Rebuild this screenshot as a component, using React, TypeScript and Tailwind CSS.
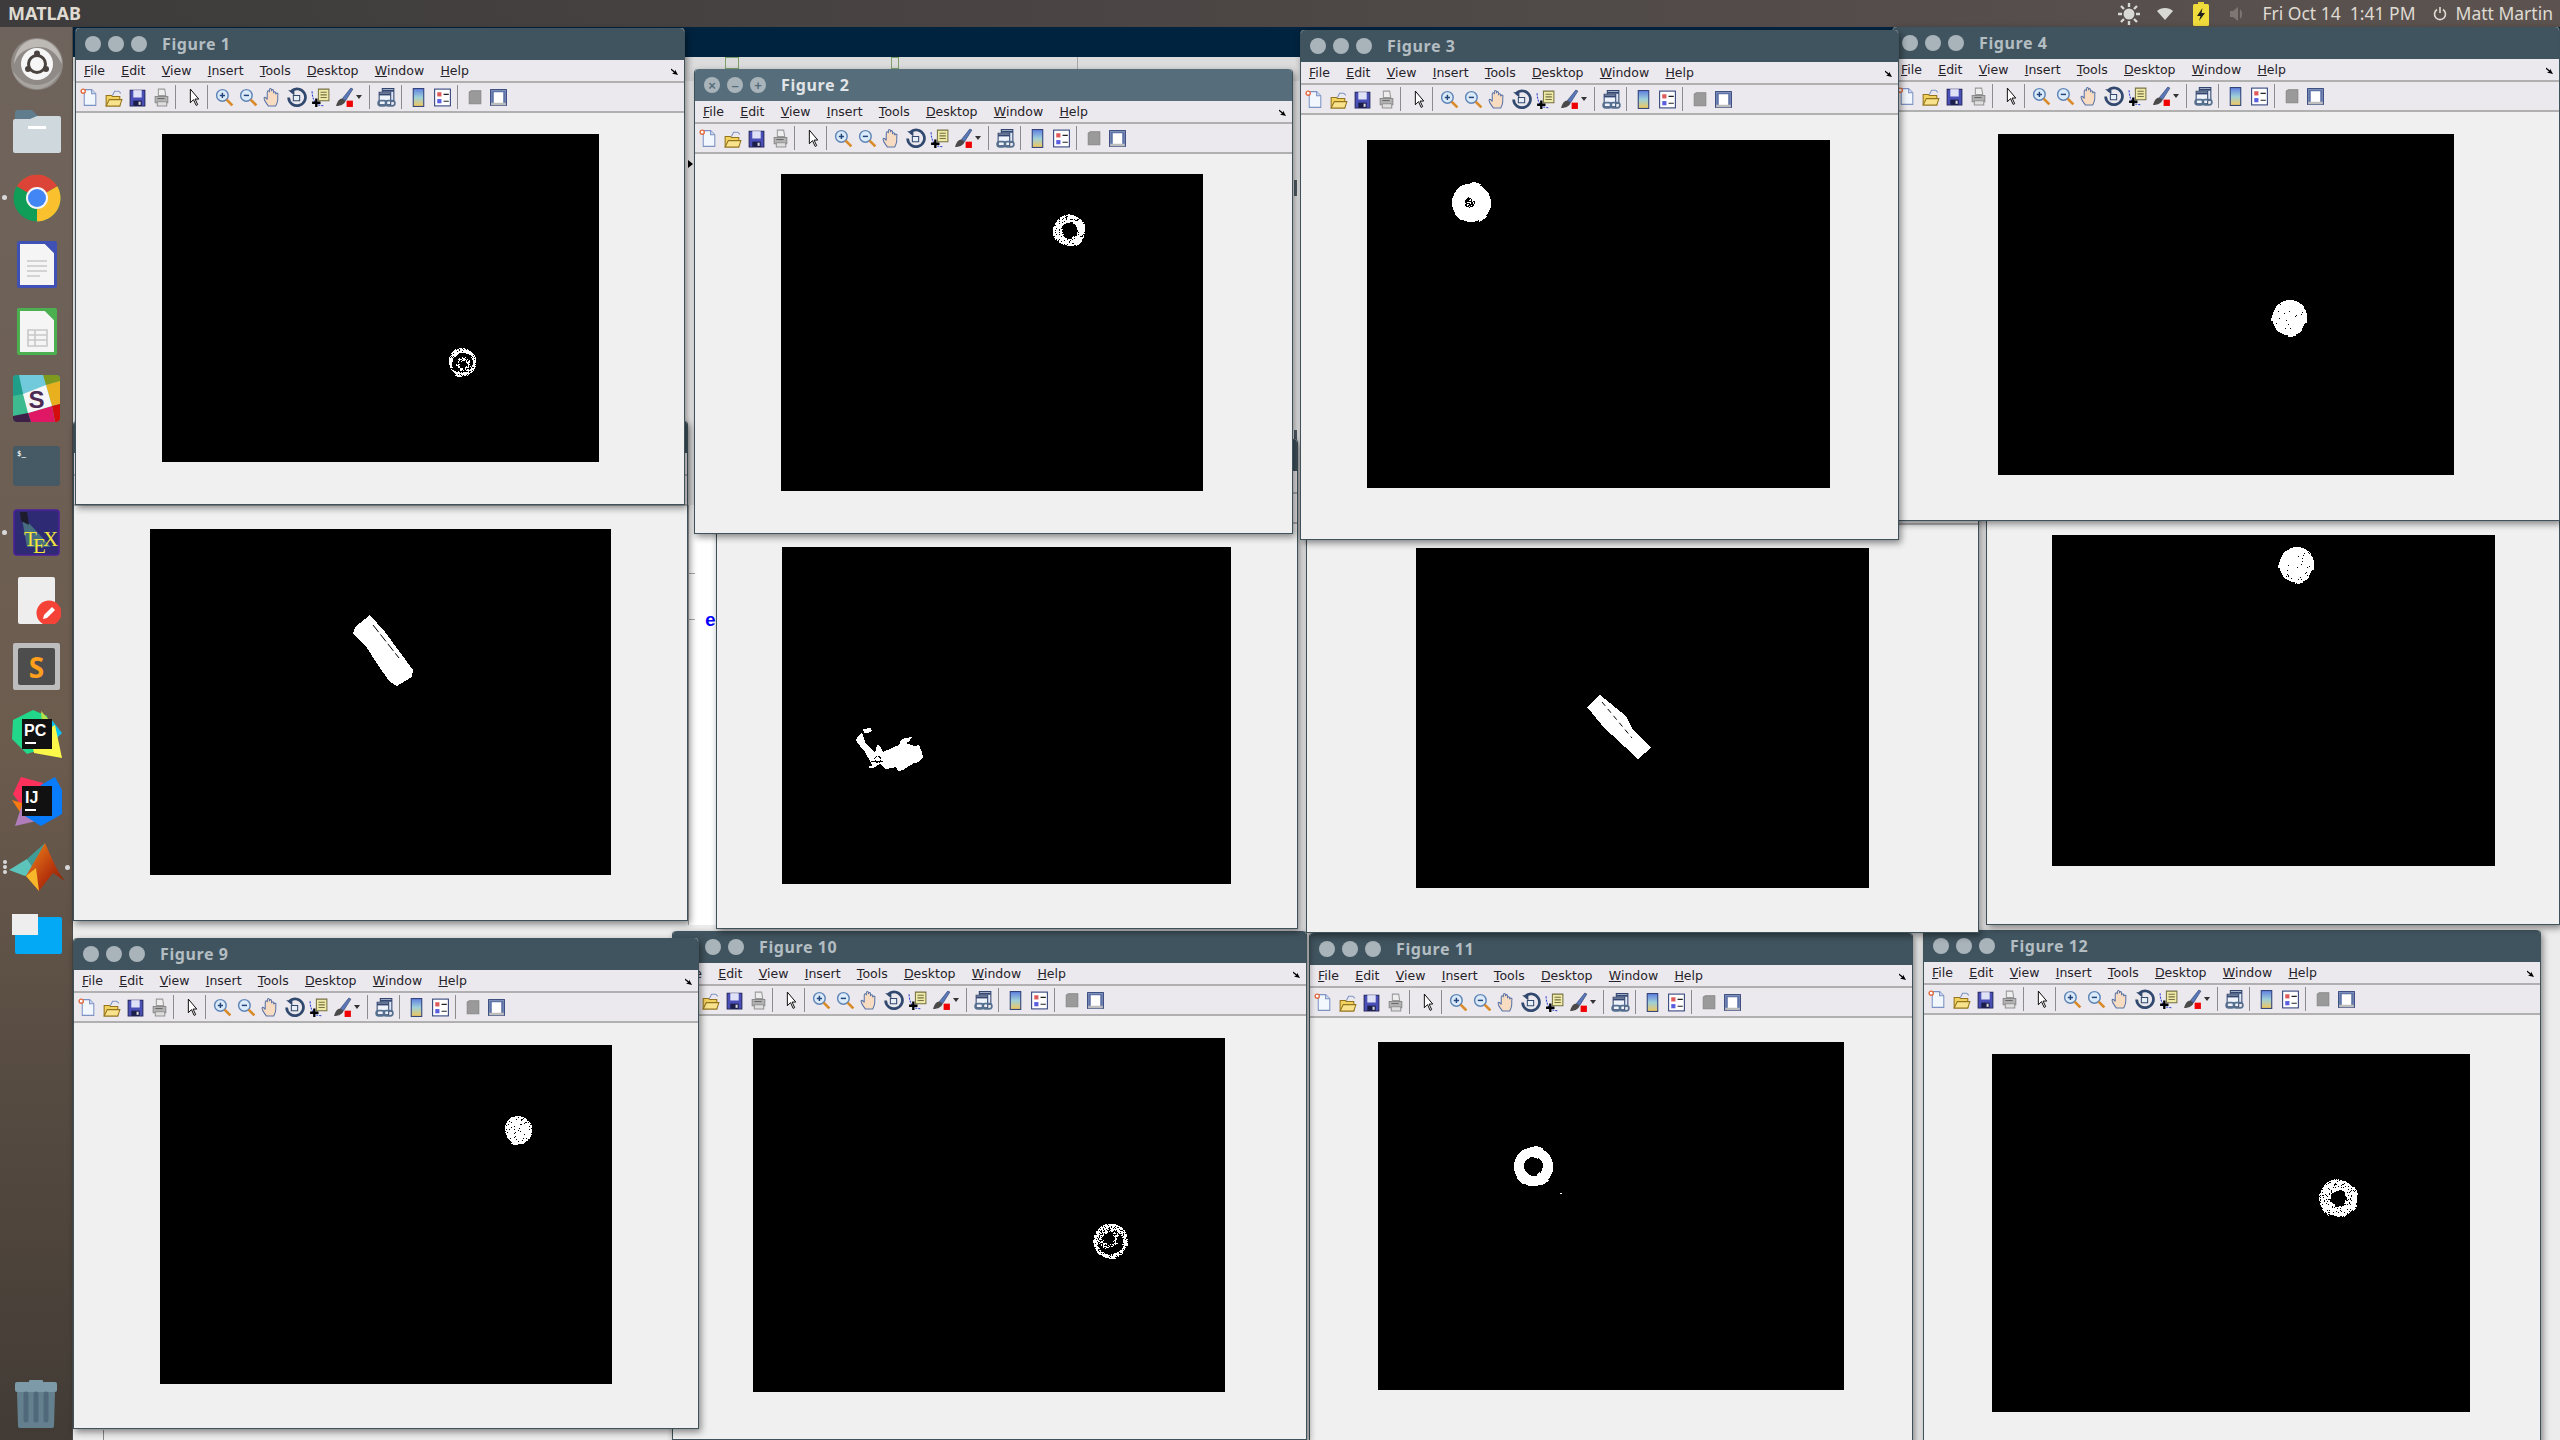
import type { ReactNode } from "react";

const noise = (x: number, y: number) => {
  const s = Math.sin(x * 12.9898 + y * 78.233) * 43758.5453;
  return s - Math.floor(s);
};

// binary blob, drawn pixel by pixel so it has the thresholded look of the plots
const Blob = ({ cx, cy, r, hole = 0, density = 1, jitter = 2, fill = "#fff" }: { cx: number; cy: number; r: number; hole?: number; density?: number; jitter?: number; fill?: string }) => {
  let d = "";
  const R = Math.ceil(r + jitter + 1);
  for (let y = -R; y <= R; y++) {
    for (let x = -R; x <= R; x++) {
      const dist = Math.hypot(x, y);
      const sector = Math.round((Math.atan2(y, x) + Math.PI) * 2.2);
      const j = (noise(sector, r) - 0.5) * jitter;
      if (dist < r + j && dist > hole - j && noise(x + cx, y + cy) < density) d += `M${cx + x} ${cy + y}h1v1h-1z`;
    }
  }
  return <path d={d} fill={fill} shapeRendering="crispEdges" />;
};

const Shape = ({ points }: { points: string }) => <polygon points={points} fill="#fff" shapeRendering="crispEdges" />;

const ToolIcon = ({ children }: { children: ReactNode }) => (
  <span className="flex w-[24px] h-[24px] items-center justify-center">
    <svg width="21" height="21" viewBox="0 0 20 20">{children}</svg>
  </span>
);

const Sep = ({ className }: { className: string }) => <span className={`w-px h-[24px] bg-[#8c8c8c] ${className}`} />;

const Toolbar = () => (
  <div className="flex h-[30px] items-center pl-[1px] bg-[#ebe9ed] border-b-2 border-[#b0b0b0]">
    <ToolIcon>
      <path d="M5 2.5h7l4 4v11H5z" fill="#f2f6fd" stroke="#7d93c4" />
      <path d="M12 2.5v4h4" fill="#cfdcf2" stroke="#7d93c4" />
      <circle cx="4" cy="4" r="2" fill="#fff" stroke="#e2673c" strokeWidth="1.3" />
    </ToolIcon>
    <ToolIcon>
      <path d="M3 8h5l1 1h7v9H3z" fill="#f2d25e" stroke="#94741d" />
      <path d="M9 8l2-4 4 0 2 2" fill="none" stroke="#7d93c4" />
      <path d="M3 18l3-6h12l-2 6z" fill="#f8e38c" stroke="#94741d" />
    </ToolIcon>
    <ToolIcon>
      <path d="M3 3h14v15H3z" fill="#4a4fb8" stroke="#23265f" />
      <path d="M6 3h8v7H6z" fill="#dfe1f6" />
      <path d="M6 13h8v5H6z" fill="#1c1e4a" />
      <path d="M11 14h2v3h-2z" fill="#d8d8d8" />
    </ToolIcon>
    <ToolIcon>
      <path d="M7 2h6l1 6H7z" fill="#eeeeee" stroke="#9a9a9a" />
      <path d="M4 9h12v6H4z" fill="#b2b2b2" stroke="#8a8a8a" />
      <path d="M6 14h9v4H6z" fill="#dedede" stroke="#929292" />
      <path d="M6 11h7" stroke="#6a6a6a" />
    </ToolIcon>
    <Sep className="ml-[2px]" />
    <span className="ml-[5px]">
      <ToolIcon>
        <path d="M7 2v13l3-3 2.5 5.5 1.5-.7L11.5 11.5H15z" fill="#fff" stroke="#000" strokeWidth="0.9" />
      </ToolIcon>
    </span>
    <Sep className="ml-[2px]" />
    <span className="ml-[4px]" />
    <ToolIcon>
      <circle cx="8" cy="8" r="5.5" fill="#dcebfa" stroke="#5f86b8" strokeWidth="1.4" />
      <path d="M5.5 8h5M8 5.5v5" stroke="#23467c" strokeWidth="1.4" />
      <path d="M12 12l5.5 5.5" stroke="#d98a2b" strokeWidth="2.6" />
    </ToolIcon>
    <ToolIcon>
      <circle cx="8" cy="8" r="5.5" fill="#dcebfa" stroke="#5f86b8" strokeWidth="1.4" />
      <path d="M5.5 8h5" stroke="#23467c" strokeWidth="1.4" />
      <path d="M12 12l5.5 5.5" stroke="#d98a2b" strokeWidth="2.6" />
    </ToolIcon>
    <ToolIcon>
      <path d="M6 18c-2-3-4-5-4-7s2-1 3 1V5c0-2 2-2 2 0V3c0-2 2-2 2 0v1c0-2 2-2 2 0v2c0-2 2-2 2 0v1c1-2 3-1 2 1v4c0 3-1 4-2 6z" fill="#f8dcc2" stroke="#5b74a8" />
    </ToolIcon>
    <ToolIcon>
      <path d="M5 4a8 8 0 1 1-2.5 6" fill="none" stroke="#31486f" strokeWidth="2.6" />
      <path d="M2 3h6v5z" fill="#31486f" />
      <path d="M7 8h6v5H7z" fill="#e8eef6" stroke="#31486f" />
    </ToolIcon>
    <ToolIcon>
      <path d="M8 2h10v11H8z" fill="#efe9a6" stroke="#767245" />
      <path d="M10 5h6M10 7.5h6M10 10h6" stroke="#767245" />
      <path d="M2 4c0 6 2 10 5 13l6 1" fill="none" stroke="#2a3fd0" strokeDasharray="2 1" />
      <path d="M6 11v8M2 15h8" stroke="#000" strokeWidth="2.2" />
    </ToolIcon>
    <ToolIcon>
      <path d="M8 11L16 1l2 1-7 11z" fill="#5a78b8" stroke="#2d3f70" strokeWidth="0.6" />
      <path d="M2 18c1-4 3-7 6-7l3 2c-1 3-4 5-9 5z" fill="#4a4a4a" />
      <path d="M12 13h6v6h-6z" fill="#f00000" />
    </ToolIcon>
    <span className="ml-[-1px] w-[8px] flex justify-center">
      <span className="border-x-[3px] border-t-[4px] border-x-transparent border-t-[#333]" />
    </span>
    <Sep className="ml-[6px]" />
    <span className="ml-[4px]" />
    <ToolIcon>
      <path d="M6 1.5h11v12H6z" fill="#dfe7f5" stroke="#33466f" />
      <path d="M6 3.5h11" stroke="#33466f" strokeWidth="2" />
      <path d="M3 5h11v12H3z" fill="#eef2fa" stroke="#33466f" />
      <path d="M3 7h11" stroke="#33466f" strokeWidth="2" />
      <rect x="2" y="13" width="8" height="5" rx="2.5" fill="none" stroke="#56708f" strokeWidth="1.6" />
      <rect x="9" y="13" width="9" height="5" rx="2.5" fill="none" stroke="#56708f" strokeWidth="1.6" />
    </ToolIcon>
    <Sep className="ml-[3px]" />
    <span className="ml-[4px]" />
    <ToolIcon>
      <defs>
        <linearGradient id="cbar" x1="0" y1="0" x2="0" y2="1">
          <stop offset="0" stopColor="#5f7fe0" />
          <stop offset="0.5" stopColor="#9fd0d8" />
          <stop offset="1" stopColor="#f2c85a" />
        </linearGradient>
      </defs>
      <rect x="5" y="1.5" width="10" height="17" fill="url(#cbar)" stroke="#2d3f78" />
    </ToolIcon>
    <ToolIcon>
      <rect x="2.5" y="2" width="15" height="16" fill="#fff" stroke="#2d3f78" />
      <path d="M5 5h4v4H5z" fill="#df5a5a" />
      <path d="M5 11.5h4v4H5z" fill="#5a5fdf" />
      <path d="M11 7h5M11 13.5h5" stroke="#222" />
    </ToolIcon>
    <Sep className="ml-[3px]" />
    <span className="ml-[4px]" />
    <ToolIcon>
      <path d="M5 5l2-1.5h9V16H5z" fill="#9a9a9a" stroke="#8a8a8a" />
    </ToolIcon>
    <ToolIcon>
      <rect x="2.5" y="2.5" width="15" height="15" fill="#fff" stroke="#2d3f78" />
      <path d="M3 3h14v2H3zM3 5h2.5v12H3zM14.5 5H17v12h-2.5z" fill="#5f74a8" />
      <path d="M3 15h14v2.5H3z" fill="#bdbdbd" />
    </ToolIcon>
  </div>
);

const menus = ["File", "Edit", "View", "Insert", "Tools", "Desktop", "Window", "Help"];

const Menu = () => (
  <div className="flex h-[23px] items-center gap-[16.3px] pl-[8px] pr-[5px] pt-[1px] bg-[#ebe9ed] border-b-2 border-[#b0b0b0] font-['DejaVu_Sans',sans-serif] text-[12.5px] text-[#26222a]">
    {menus.map((m) => (
      <span key={m}>
        <span className="underline">{m[0]}</span>
        {m.slice(1)}
      </span>
    ))}
    <svg className="ml-auto" width="9" height="9" viewBox="0 0 9 9">
      <path d="M1 1.5l4 3V2.5l3 5.5-6-1.5 2-1-3-2.5z" fill="#000" />
    </svg>
  </div>
);

const Light = ({ glyph }: { glyph?: string }) => (
  <span className="flex w-[16px] h-[16px] items-center justify-center rounded-full bg-[#a9b4ba]">
    {glyph && <span className="font-['Liberation_Sans',sans-serif] font-bold text-[13px] leading-none text-[#566e7b]">{glyph}</span>}
  </span>
);

type FigureProps = {
  n: number;
  pos: string;
  plot: string;
  box: string;
  active?: boolean;
  children: ReactNode;
};

const Figure = ({ n, pos, plot, box, active, children }: FigureProps) => (
  <div className={`absolute flex flex-col bg-[#f0f0f0] border-x border-b border-[#3f515a] rounded-t-[4px] shadow-[2px_3px_7px_rgba(0,0,0,0.45)] ${pos}`}>
    <div className={`flex h-[32px] shrink-0 items-center pl-[9px] gap-[7px] rounded-t-[4px] ${active ? "bg-[#566e7b]" : "bg-[#40545f]"}`}>
      <Light glyph={active ? "×" : undefined} />
      <Light glyph={active ? "–" : undefined} />
      <Light glyph={active ? "+" : undefined} />
      <span className={`ml-[8px] font-['Noto_Sans',sans-serif] font-bold text-[16px] tracking-[0.6px] ${active ? "text-[#e1e5e7]" : "text-[#b3bdc2]"}`}>Figure {n}</span>
    </div>
    <Menu />
    <Toolbar />
    <div className={`bg-black shrink-0 ${plot}`}>
      <svg className="block w-full h-full" viewBox={box}>{children}</svg>
    </div>
  </div>
);

const TopBar = () => (
  <div className="flex h-[27px] shrink-0 items-center pl-[8px] pr-[7px] bg-gradient-to-r from-[#3d3b3b] to-[#5c5350] text-[#dfdbd2] font-['Noto_Sans',sans-serif] text-[17.5px]">
    <span className="font-bold text-[18px]">MATLAB</span>
    <svg className="ml-auto" width="24" height="24" viewBox="0 0 24 24" fill="#d8d8d4" stroke="#d8d8d4">
      <circle cx="12" cy="12" r="5.5" stroke="none" />
      <path d="M12 1v4M12 19v4M1 12h4M19 12h4M4 4l3 3M17 17l3 3M20 4l-3 3M7 17l-3 3" strokeWidth="2.4" />
    </svg>
    <svg className="ml-[16px]" width="16" height="14" viewBox="0 0 16 14">
      <path d="M0 4c4-4 12-4 16 0l-8 9z" fill="#d8d8d4" />
    </svg>
    <svg className="ml-[20px]" width="16" height="24" viewBox="0 0 16 24">
      <rect x="5" y="0" width="6" height="3" fill="#e8d23a" />
      <rect x="0" y="2" width="16" height="22" rx="1.5" fill="#efdb3c" />
      <path d="M9.5 6L4 14h3.5L6 19l6-8H8.5z" fill="#1c1c1c" />
    </svg>
    <svg className="ml-[20px]" width="16" height="16" viewBox="0 0 16 16" fill="#7d7672">
      <path d="M1 5h3l5-4v14l-5-4H1z" />
      <path d="M11 3a7 7 0 0 1 0 10z" />
    </svg>
    <span className="ml-[17px] whitespace-pre">Fri Oct 14  1:41 PM</span>
    <svg className="ml-[17px]" width="14" height="15" viewBox="0 0 14 15" fill="none" stroke="#dfdbd2" strokeWidth="1.6">
      <path d="M7 1v6M4 3.5a5.5 5.5 0 1 0 6 0" />
    </svg>
    <span className="ml-[9px]">Matt Martin</span>
  </div>
);

const DockSlot = ({ dot, children }: { dot?: boolean; children: ReactNode }) => (
  <div className="relative flex h-[67px] w-[73px] shrink-0 items-center justify-center">
    {dot && <span className="absolute left-[2px] top-[31px] w-[5px] h-[5px] rounded-full bg-[#d8d8d8]" />}
    {children}
  </div>
);

const Dock = () => (
  <div className="flex flex-col w-[73px] shrink-0 pt-[3px] bg-gradient-to-b from-[#6f645d] via-[#6c5c4e] to-[#423b35] border-r border-[#4d4a48]">
    <DockSlot>
      <svg width="54" height="54" viewBox="0 0 54 54">
        <circle cx="27" cy="27" r="26" fill="#8f8a86" />
        <path d="M27 2c14 0 25 12 25 25-6-12-14-18-25-17C16 11 8 16 4 27 5 13 14 2 27 2z" fill="#bdbab6" />
        <path d="M27 52c-10 0-22-8-24-18 6 9 14 14 24 14 9 0 17-5 23-14-3 10-13 18-23 18z" fill="#a8a4a0" />
        <circle cx="27" cy="27" r="16" fill="#f6f6f6" />
        <circle cx="27" cy="27" r="8.5" fill="none" stroke="#4a4340" strokeWidth="3" />
        <circle cx="27" cy="16.5" r="3" fill="#4a4340" />
        <circle cx="18" cy="32" r="3" fill="#4a4340" />
        <circle cx="36" cy="32" r="3" fill="#4a4340" />
      </svg>
    </DockSlot>
    <DockSlot>
      <svg width="48" height="44" viewBox="0 0 48 44">
        <path d="M2 4q0-3 3-3h14l6 6h20q1 0 1 2v10H2z" fill="#5f7d8c" />
        <path d="M0 12q0-2 2-2h15l7-3 22 0q2 0 2 2v33q0 2-2 2H2q-2 0-2-2z" fill="#cfd8dc" />
        <rect x="15" y="17" width="18" height="3" fill="#fff" />
      </svg>
    </DockSlot>
    <DockSlot dot>
      <svg width="54" height="54" viewBox="0 0 54 54">
        <circle cx="27" cy="27" r="23.5" fill="#0f9d58" />
        <path d="M27 27L6.65 15.25A23.5 23.5 0 0 1 47.35 15.25Z" fill="#db4437" />
        <path d="M27 27L47.35 15.25A23.5 23.5 0 0 1 27 50.5Z" fill="#fbc02d" />
        <circle cx="27" cy="27" r="11" fill="#f5f5f5" />
        <circle cx="27" cy="27" r="9" fill="#4285f4" />
      </svg>
    </DockSlot>
    <DockSlot>
      <svg width="40" height="47" viewBox="0 0 40 47">
        <rect width="40" height="47" rx="2" fill="#3f51b5" />
        <path d="M3 3h25l9 9v32H3z" fill="#f5f5f5" />
        <path d="M28 3l9 9V3z" fill="#3f51b5" />
        <path d="M10 20h20M10 25h20M10 30h20M10 35h13" stroke="#c8c8c8" strokeWidth="1.6" />
      </svg>
    </DockSlot>
    <DockSlot>
      <svg width="40" height="47" viewBox="0 0 40 47">
        <rect width="40" height="47" rx="2" fill="#4caf50" />
        <path d="M3 3h25l9 9v32H3z" fill="#f5f5f5" />
        <path d="M28 3l9 9V3z" fill="#4caf50" />
        <path d="M11 22h19v16H11zM11 27h19M11 32h19M18 22v16" fill="none" stroke="#c8c8c8" strokeWidth="1.6" />
      </svg>
    </DockSlot>
    <DockSlot>
      <svg width="47" height="47" viewBox="0 0 47 47">
        <rect width="47" height="47" rx="4" fill="#3eba91" />
        <path d="M4 0h28l2 11-24 8z" fill="#70cadb" />
        <path d="M0 4q0-4 4-4h2l4 19L0 21z" fill="#1f9e8a" />
        <path d="M30 0h13q4 0 4 4v2L33 10z" fill="#7d9a1f" />
        <path d="M33 10l14-4v23l-8 2z" fill="#e8b01e" />
        <path d="M39 31l8-2v14q0 4-4 4h-1z" fill="#d40e0d" />
        <path d="M15 38l24-7 3 16H18z" fill="#e01765" />
        <path d="M0 41l15-3 3 9H4q-4 0-4-4z" fill="#3e1f47" />
        <path d="M10 19l23-9 6 21-24 7z" fill="#f6f6f6" />
        <text x="23.5" y="33" textAnchor="middle" fontFamily="'Liberation Sans',sans-serif" fontWeight="700" fontSize="24" fill="#4d2a54">S</text>
      </svg>
    </DockSlot>
    <DockSlot>
      <svg width="47" height="40" viewBox="0 0 47 40">
        <rect width="47" height="40" rx="3" fill="#455a64" />
        <text x="4" y="10" fontFamily="'DejaVu Sans Mono',monospace" fontWeight="700" fontSize="7.5" fill="#e8ecee">$_</text>
      </svg>
    </DockSlot>
    <DockSlot dot>
      <svg width="48" height="48" viewBox="0 0 48 48">
        <rect x="1" y="1" width="45" height="45" rx="3" fill="#2f2a74" stroke="#4b1f9c" strokeWidth="1.5" />
        <path d="M8 4l6 8 24 26H14z" fill="#5aa58a" opacity="0.55" />
        <path d="M7 3h7l2 13-8-4z" fill="#1c1c2c" />
        <text x="11" y="37" fontFamily="'Liberation Serif',serif" fontSize="21" fill="#f3e53a">T</text>
        <text x="20" y="44" fontFamily="'Liberation Serif',serif" fontSize="21" fill="#f3e53a">E</text>
        <text x="30" y="37" fontFamily="'Liberation Serif',serif" fontSize="21" fill="#f3e53a">X</text>
      </svg>
    </DockSlot>
    <DockSlot>
      <svg width="48" height="48" viewBox="0 0 48 48">
        <rect x="5" y="1" width="37" height="47" rx="2" fill="#eeeeee" />
        <circle cx="36" cy="37" r="12.5" fill="#f44336" />
        <path d="M30 43l1-4 8-8 3 3-8 8z" fill="#fff" />
      </svg>
    </DockSlot>
    <DockSlot>
      <svg width="47" height="47" viewBox="0 0 47 47">
        <rect width="47" height="47" rx="2" fill="#bdbdbd" />
        <rect x="5" y="5" width="37" height="37" rx="2" fill="#4d4d4d" />
        <text x="23.5" y="35" textAnchor="middle" fontFamily="'Noto Sans',sans-serif" fontWeight="700" fontSize="28" fill="#ff9f1c">S</text>
      </svg>
    </DockSlot>
    <DockSlot>
      <svg width="52" height="50" viewBox="0 0 52 50">
        <path d="M2 11l20-10 14 6 5 30-25 8L1 30z" fill="#21d789" />
        <path d="M30 2l12 13-10 10z" fill="#b7e04a" />
        <path d="M40 10l11 14-10 10z" fill="#07c3f2" />
        <path d="M20 30l24-14 7 33-28-5z" fill="#fcf84a" />
        <rect x="11" y="10" width="30" height="30" fill="#111" />
        <text x="13" y="27" fontFamily="'Liberation Sans',sans-serif" fontWeight="700" fontSize="16" fill="#fff">PC</text>
        <rect x="14" y="33" width="11" height="2" fill="#fff" />
      </svg>
    </DockSlot>
    <DockSlot>
      <svg width="52" height="50" viewBox="0 0 52 50">
        <path d="M2 18L10 1l22 6 3 24-18 8z" fill="#fe315d" />
        <path d="M1 24l10 3 2 15z" fill="#f97a12" />
        <path d="M14 20l16 24-26 6z" fill="#b07cb9" />
        <path d="M30 9l14-8 7 13v24l-21 12-16-10z" fill="#087cfa" />
        <rect x="11" y="10" width="30" height="30" fill="#111" />
        <text x="14" y="27" fontFamily="'Liberation Sans',sans-serif" fontWeight="700" fontSize="16" fill="#fff">IJ</text>
        <rect x="14" y="33" width="11" height="2" fill="#fff" />
      </svg>
    </DockSlot>
    <DockSlot>
      <span className="absolute left-[3px] top-[26px] flex flex-col gap-[1px]">
        <span className="w-[4px] h-[4px] rounded-full bg-[#d8d8d8]" />
        <span className="w-[4px] h-[4px] rounded-full bg-[#d8d8d8]" />
        <span className="w-[4px] h-[4px] rounded-full bg-[#d8d8d8]" />
      </span>
      <span className="absolute left-[65px] top-[31px] w-[5px] h-[5px] rounded-full bg-[#d8d8d8]" />
      <svg width="56" height="50" viewBox="0 0 56 50">
        <defs>
          <linearGradient id="membrane" x1="0" y1="0" x2="1" y2="1">
            <stop offset="0" stopColor="#f28b1c" />
            <stop offset="0.6" stopColor="#b8360c" />
            <stop offset="1" stopColor="#7a1a06" />
          </linearGradient>
        </defs>
        <path d="M0 27l18-11 8 11-10 6z" fill="#5cc4bb" />
        <path d="M18 16l18-16-10 27z" fill="#3f9c96" />
        <path d="M36 0c5 10 10 26 20 38L44 30 30 48 17 33z" fill="url(#membrane)" />
        <path d="M17 33l10-8 3 23z" fill="#f6b72a" />
      </svg>
    </DockSlot>
    <DockSlot>
      <span className="relative flex w-[50px] h-[40px]">
        <span className="absolute left-[3px] top-[2px] w-[47px] h-[37px] rounded-[2px] bg-[#03a9f4]" />
        <span className="absolute left-0 top-[-1px] w-[26px] h-[21px] bg-[#eeeeee]" />
      </span>
    </DockSlot>
    <div className="mt-auto flex justify-center pb-[12px]">
      <svg width="42" height="48" viewBox="0 0 42 48">
        <rect x="14" y="0" width="14" height="4" rx="1" fill="#7d9aa8" />
        <rect x="0" y="2" width="42" height="10" rx="2" fill="#7d9aa8" />
        <path d="M2 12h38l-1 34q0 2-2 2H5q-2 0-2-2z" fill="#64808e" />
        <path d="M11 14v26M21 14v26M31 14v26" stroke="#50697a" strokeWidth="5" strokeLinecap="round" />
      </svg>
    </div>
  </div>
);

export default function App() {
  return (
    <div className="relative flex flex-col w-[2560px] h-[1440px] overflow-hidden bg-[#efefef]">
      <TopBar />
      <div className="flex flex-1 min-h-0">
        <Dock />
        {/* the MATLAB desktop behind all the figures */}
        <div className="flex flex-col flex-1">
          <div className="h-[30px] bg-[#00233f]" />
          <div className="flex h-[24px] items-start gap-[152px] pl-[652px] bg-[#dcdcdc]">
            <span className="w-[14px] h-[12px] border border-[#7da06a]" />
            <span className="w-[8px] h-[12px] border border-[#7da06a]" />
            <span className="w-px h-[24px] bg-[#a8a8a8] ml-[26px]" />
          </div>
          <div className="flex-1 bg-[#ececec]" />
        </div>
      </div>

      <div className="absolute left-[688px] top-[505px] w-[30px] h-[420px] border-l border-[#a8a8a8] bg-white">
        <span className="absolute left-0 top-[68px] w-[6px] h-px bg-[#a8a8a8]" />
        <span className="absolute left-0 top-[114px] w-[6px] h-px bg-[#a8a8a8]" />
        <span className="absolute left-[16px] top-[106px] font-['Liberation_Mono',monospace] font-bold text-[18px] leading-[20px] text-[#0000ff]">e</span>
      </div>
      <span className="absolute left-[688px] top-[160px] border-y-[4px] border-l-[5px] border-y-transparent border-l-black z-10" />
      <span className="absolute left-[1294px] top-[180px] w-[3px] h-[16px] bg-[#55606a]" />
      <span className="absolute left-[1294px] top-[430px] w-[3px] h-[44px] bg-[#55606a]" />
      <span className="absolute left-[103px] top-[1430px] w-[1px] h-[10px] bg-[#888]" />

      <Figure n={12} pos="left-[1923px] top-[930px] w-[618px] h-[515px]" plot="ml-[68px] mt-[39px] w-[478px] h-[358px]" box="1992 1054 478 358">
        <Blob cx={2338} cy={1198} r={19} hole={8} density={0.88} />
        <Blob cx={2338} cy={1198} r={12} hole={10} density={0.25} jitter={0} />
      </Figure>
      <Figure n={11} pos="left-[1309px] top-[933px] w-[604px] h-[512px]" plot="ml-[68px] mt-[24px] w-[466px] h-[348px]" box="1378 1042 466 348">
        <Blob cx={1533} cy={1166} r={20} hole={9} jitter={1.5} />
        <rect x={1560} y={1193} width={2} height={1} fill="#fff" />
      </Figure>
      <Figure n={10} pos="left-[672px] top-[931px] w-[635px] h-[509px]" plot="ml-[80px] mt-[22px] w-[472px] h-[354px]" box="753 1038 472 354">
        <Blob cx={1110} cy={1241} r={17} hole={13} density={0.8} />
        <Blob cx={1108} cy={1238} r={10} hole={6} density={0.55} />
      </Figure>
      <Figure n={9} pos="left-[73px] top-[938px] w-[626px] h-[491px]" plot="ml-[86px] mt-[22px] w-[452px] h-[339px]" box="160 1045 452 339">
        <Blob cx={518} cy={1130} r={14} density={0.93} />
      </Figure>
      <Figure n={8} pos="left-[1986px] top-[430px] w-[574px] h-[495px]" plot="ml-[65px] mt-[20px] w-[443px] h-[331px]" box="2052 535 443 331">
        <Blob cx={2296} cy={565} r={17} density={0.98} jitter={3} />
      </Figure>
      <Figure n={7} pos="left-[1306px] top-[440px] w-[673px] h-[493px]" plot="ml-[109px] mt-[23px] w-[453px] h-[340px]" box="1416 548 453 340">
        <Shape points="1600,695 1587,707 1606,730 1612,735 1638,759 1651,748 1632,728 1626,716" />
        <path d="M1602 702l30 36" stroke="#000" strokeWidth="1" strokeDasharray="5 4" />
      </Figure>
      <Figure n={6} pos="left-[716px] top-[439px] w-[582px] h-[490px]" plot="ml-[65px] mt-[23px] w-[449px] h-[337px]" box="782 547 449 337">
        <Shape points="856,740 858,736 862,733 866,744 871,749 875,753 877,745 880,746 883,752 892,748 899,745 901,740 905,738 912,737 909,742 905,743 915,746 919,745 922,752 923,757 919,762 914,763 903,770 898,771 896,767 886,769 880,764 873,768 871,763 865,752 860,746 857,742" />
        <Shape points="863,729 871,728 872,731 868,733 864,733" />
        <Blob cx={877} cy={759} r={4} hole={2} density={0.35} jitter={0} fill="#000" />
        <rect x={871} y={761} width={12} height={1} fill="#000" />
        <rect x={869} y={766} width={4} height={2} fill="#fff" />
      </Figure>
      <Figure n={5} pos="left-[73px] top-[421px] w-[615px] h-[500px]" plot="ml-[76px] mt-[23px] w-[461px] h-[346px]" box="150 529 461 346">
        <Shape points="355,627 370,615 385,632 413,670 412,677 397,686 390,682 380,668 365,645 353,634" />
        <path d="M373 625l26 33" stroke="#000" strokeWidth="1" strokeDasharray="9 3" />
      </Figure>
      <Figure n={4} pos="left-[1892px] top-[27px] w-[668px] h-[494px]" plot="ml-[105px] mt-[22px] w-[456px] h-[341px]" box="1998 134 456 341">
        <Blob cx={2289} cy={318} r={17} density={0.98} jitter={3} />
      </Figure>
      <Figure n={1} pos="left-[75px] top-[28px] w-[610px] h-[477px]" plot="ml-[86px] mt-[21px] w-[437px] h-[328px]" box="162 134 437 328">
        <Blob cx={462} cy={362} r={14} hole={10} density={0.85} />
        <Blob cx={463} cy={364} r={7} hole={4} density={0.6} />
      </Figure>
      <Figure n={2} active pos="left-[694px] top-[69px] w-[599px] h-[465px]" plot="ml-[86px] mt-[20px] w-[422px] h-[317px]" box="781 174 422 317">
        <Blob cx={1069} cy={230} r={16} hole={8} density={0.9} />
      </Figure>
      <Figure n={3} pos="left-[1300px] top-[30px] w-[599px] h-[510px]" plot="ml-[66px] mt-[25px] w-[463px] h-[348px]" box="1367 140 463 348">
        <Blob cx={1471} cy={202} r={20} jitter={2} />
        <Blob cx={1469} cy={202} r={5} density={0.7} jitter={1} fill="#000" />
      </Figure>
    </div>
  );
}
